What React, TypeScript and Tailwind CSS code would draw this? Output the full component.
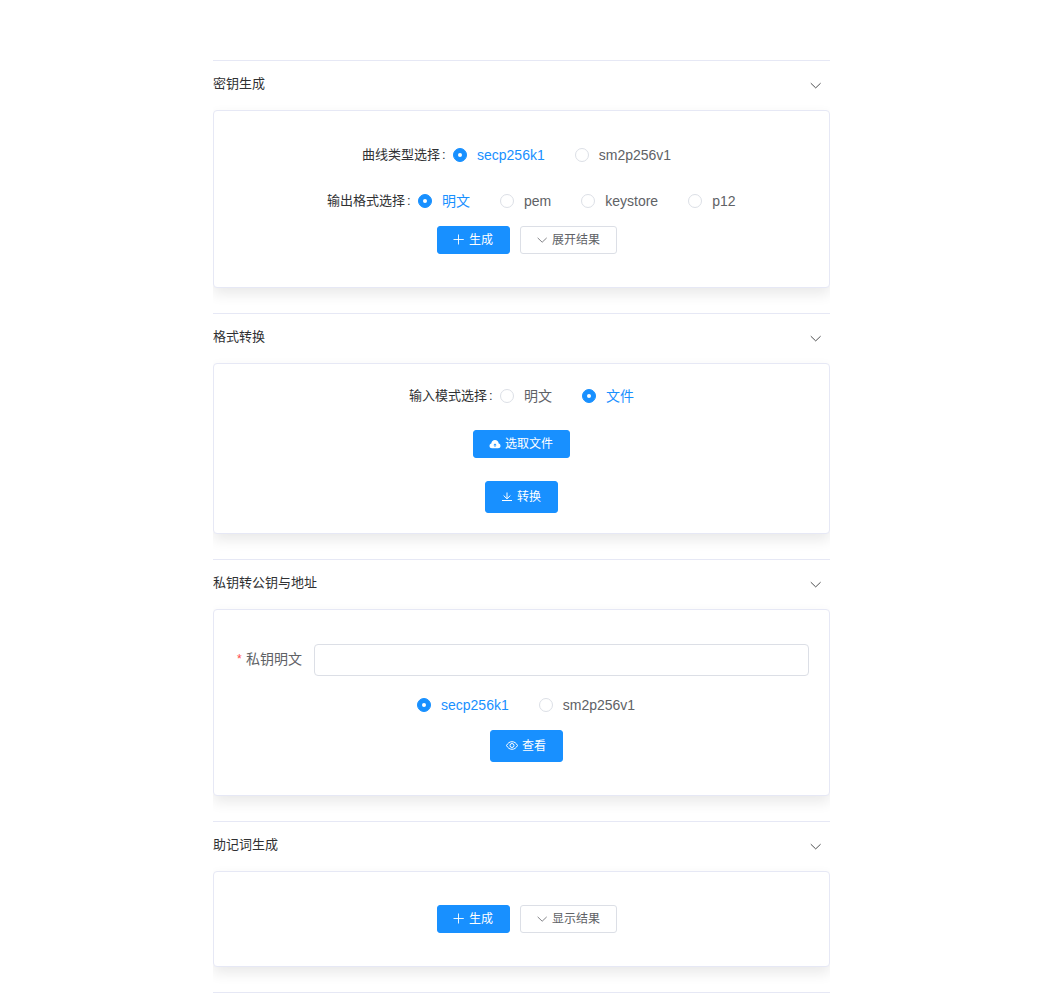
import React, { useState } from "react";

type IconProps = { className?: string };

const Chevron = ({ className = "" }: IconProps) => (
  <svg viewBox="0 0 13 13" fill="none" stroke="currentColor" strokeWidth="0.85" className={`shrink-0 ${className}`}>
    <path d="M1.8 4.2 6.7 8.9 11.6 4.2" />
  </svg>
);

const Plus = () => (
  <svg viewBox="0 0 12 12" fill="none" stroke="currentColor" strokeWidth="0.9" className="size-3 shrink-0">
    <path d="M5.5 0.5V10.5M0.5 5.5H10.8" />
  </svg>
);

const CloudUp = () => (
  <svg viewBox="0 0 12 12" className="size-3 shrink-0">
    <path
      fill="currentColor"
      fillRule="evenodd"
      d="M3 10.200C1.500 10.200.5 9.200.5 7.900.5 6.700 1.300 5.800 2.300 5.500 2.500 3.400 4 2 6 2S9.500 3.400 9.700 5.500C10.700 5.800 11.500 6.700 11.500 7.900 11.500 9.200 10.500 10.200 9 10.200ZM6 5.400 4.300 7.200H5.600V9H6.400V7.200H7.700Z"
    />
  </svg>
);

const Download = () => (
  <svg viewBox="0 0 12 12" fill="none" stroke="currentColor" strokeWidth="1" className="size-3 shrink-0">
    <path d="M6 1.500V7.500M2.600 4.500 6 7.800 9.400 4.500M1 9.500H11" />
  </svg>
);

const Eye = () => (
  <svg viewBox="0 0 12 12" fill="none" stroke="currentColor" strokeWidth="1" className="size-3 shrink-0">
    <path d="M0.500 5.500C1.800 3 3.700 1.700 6 1.700S10.200 3 11.500 5.500C10.200 8 8.300 9.300 6 9.300S1.800 8 0.500 5.500Z" />
    <circle cx="6" cy="5.500" r="2" />
  </svg>
);

function RadioGroup({ options, initial }: { options: string[]; initial: string }) {
  const [value, setValue] = useState(initial);
  return (
    <div className="flex items-center gap-[30px]">
      {options.map((o) => {
        const on = o === value;
        return (
          <button
            key={o}
            role="radio"
            aria-checked={on}
            onClick={() => setValue(o)}
            className={`flex items-center gap-2.5 text-sm leading-[18px] ${on ? "text-[#1890ff]" : "text-[#606266]"}`}
          >
            <span
              className={`flex size-3.5 items-center justify-center rounded-full border ${
                on ? "border-[#1890ff] bg-[#1890ff]" : "border-[#dcdfe6] bg-white"
              }`}
            >
              <span className="size-1 rounded-full bg-white" />
            </span>
            <span>{o}</span>
          </button>
        );
      })}
    </div>
  );
}

function Button({
  icon,
  children,
  plain = false,
  tall = false,
}: {
  icon: React.ReactNode;
  children: React.ReactNode;
  plain?: boolean;
  tall?: boolean;
}) {
  return (
    <button
      className={`flex items-center gap-1 rounded-[3px] border pr-4 pl-[15px] text-xs leading-none ${tall ? "h-8" : "h-7"} ${
        plain ? "border-[#dcdfe6] bg-white text-[#606266]" : "border-[#1890ff] bg-[#1890ff] text-white"
      }`}
    >
      {icon}
      <span>{children}</span>
    </button>
  );
}

function Section({ title, card, children }: { title: string; card: string; children: React.ReactNode }) {
  return (
    <section className="overflow-hidden border-b border-[#e6e8f5]">
      <header className="flex h-[49px] items-center justify-between pr-2 pb-[3px] text-[13px] text-[#303133]">
        <h2>{title}</h2>
        <Chevron className="mt-[3px] size-[13px]" />
      </header>
      <div className="pb-[25px]">
        <div className={`rounded-sm border border-[#e6e8f5] bg-white shadow-[0_6px_14px_rgba(0,0,0,0.09)] ${card}`}>{children}</div>
      </div>
    </section>
  );
}

const FieldLabel = ({ children }: { children: React.ReactNode }) => (
  <span className="flex text-[13px] leading-[18px] text-[#303133]">
    {children}
    <span className="w-[13px] pl-0.5">:</span>
  </span>
);

export default function App() {
  return (
    <div
      lang="zh-CN"
      className="min-h-[1001px] bg-white pt-[60px] font-['Liberation_Sans','Noto_Sans_CJK_SC',sans-serif]"
    >
      <main className="ml-[213px] w-[617px] border-t border-[#e6e8f5]">
        <Section title="密钥生成" card="h-[178px] pt-[35px]">
          <div className="ml-[148px] flex h-[18px] items-center">
            <FieldLabel>曲线类型选择</FieldLabel>
            <RadioGroup options={["secp256k1", "sm2p256v1"]} initial="secp256k1" />
          </div>
          <div className="mt-7 ml-[113px] flex h-[18px] items-center">
            <FieldLabel>输出格式选择</FieldLabel>
            <RadioGroup options={["明文", "pem", "keystore", "p12"]} initial="明文" />
          </div>
          <div className="mt-4 flex justify-center gap-2.5 pl-[11px]">
            <Button icon={<Plus />}>生成</Button>
            <Button plain icon={<Chevron className="size-3" />}>展开结果</Button>
          </div>
        </Section>

        <Section title="格式转换" card="h-[171px] pt-[23px]">
          <div className="ml-[195px] flex h-[18px] items-center">
            <FieldLabel>输入模式选择</FieldLabel>
            <RadioGroup options={["明文", "文件"]} initial="文件" />
          </div>
          <div className="mt-[25px] flex flex-col items-center gap-[23px]">
            <Button icon={<CloudUp />}>选取文件</Button>
            <Button tall icon={<Download />}>转换</Button>
          </div>
        </Section>

        <Section title="私钥转公钥与地址" card="h-[187px] pt-[34px]">
          <label className="flex items-center pr-5 pl-[23px] text-sm text-[#606266]">
            <span className="mr-1 w-[5px] pb-0.5 text-xs text-[#ff4949]">*</span>
            <span className="mr-3 pb-0.5">私钥明文</span>
            <input className="h-8 min-w-0 flex-1 rounded-sm border border-[#dcdfe6] px-3 outline-none" />
          </label>
          <div className="mt-5 ml-[203px] flex h-[18px] items-center">
            <RadioGroup options={["secp256k1", "sm2p256v1"]} initial="secp256k1" />
          </div>
          <div className="mt-4 flex justify-center pl-2.5">
            <Button tall icon={<Eye />}>查看</Button>
          </div>
        </Section>

        <Section title="助记词生成" card="h-24 pt-[33px]">
          <div className="flex justify-center gap-2.5 pl-[11px]">
            <Button icon={<Plus />}>生成</Button>
            <Button plain icon={<Chevron className="size-3" />}>显示结果</Button>
          </div>
        </Section>
      </main>
    </div>
  );
}
